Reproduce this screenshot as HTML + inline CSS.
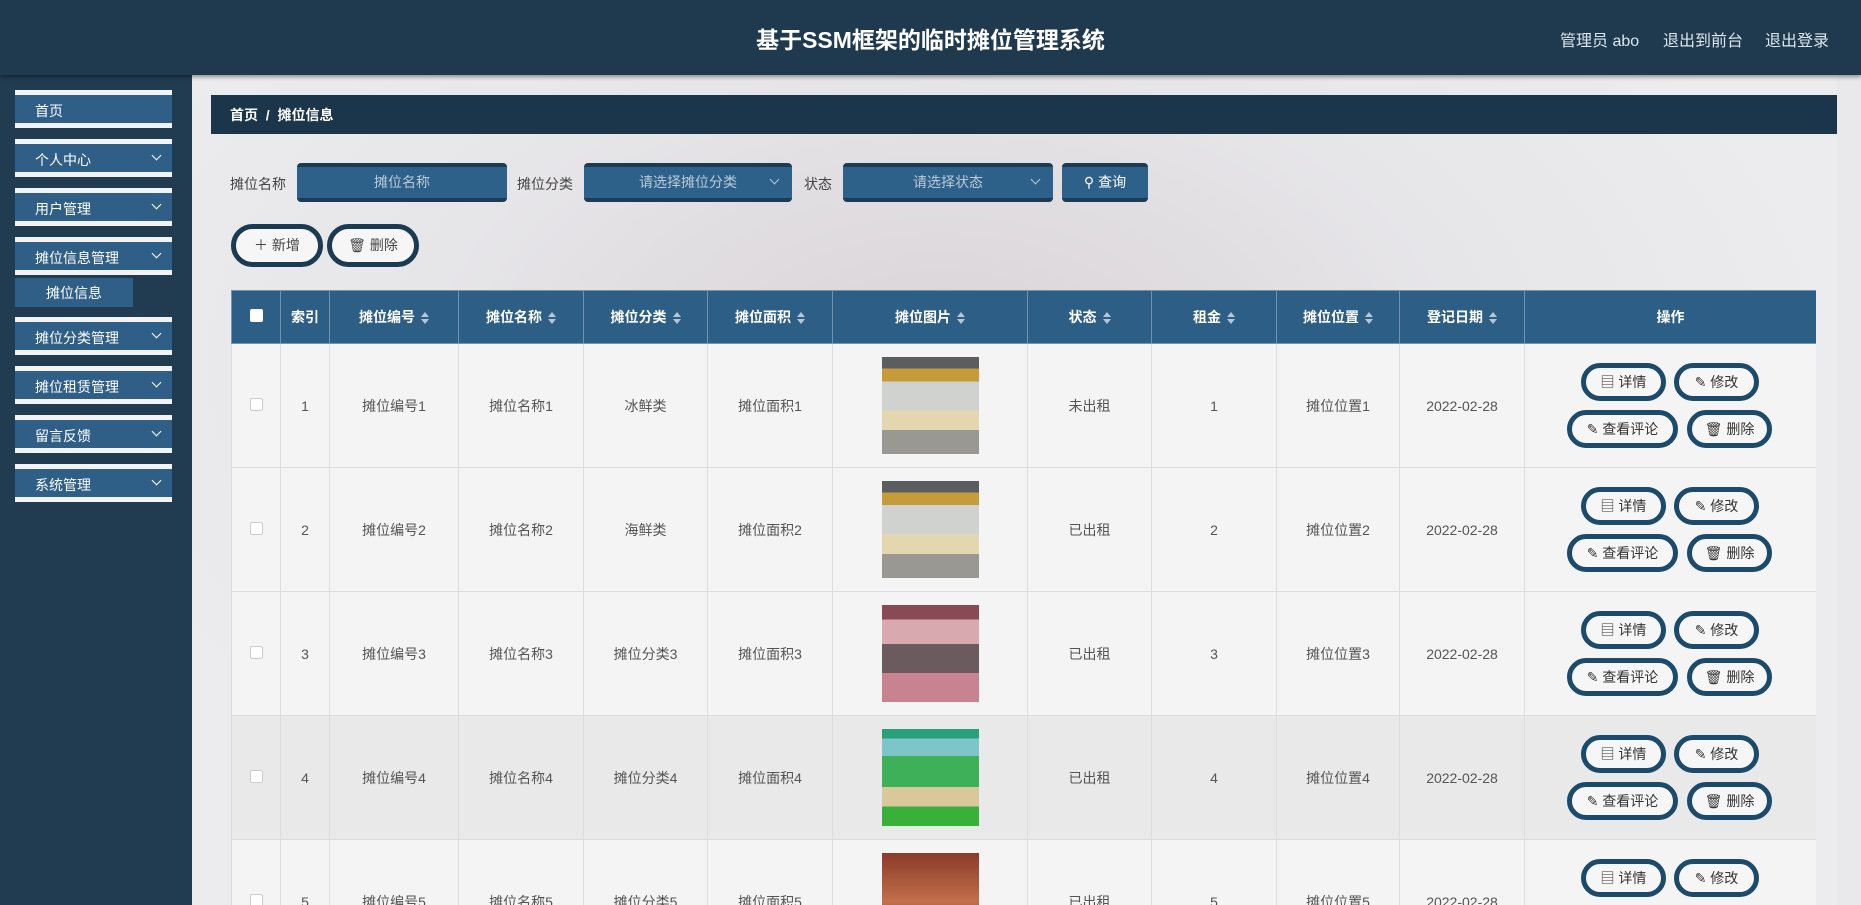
<!DOCTYPE html>
<html style="width:1861px;height:905px;overflow:hidden"><head><meta charset="utf-8">
<style>
*{margin:0;padding:0;box-sizing:border-box}
body{width:1861px;height:905px;overflow:hidden;position:relative;font-family:"Liberation Sans","Noto Sans CJK SC",sans-serif;background:#e3e4e7}
.hdr{position:absolute;left:0;top:0;width:1861px;height:75px;background:#1f3a4e;box-shadow:0 2px 4px rgba(0,0,0,.4);z-index:2}
.title{position:absolute;left:0;width:1861px;top:21px;text-align:center;color:#fff;font-size:23px;font-weight:bold}
.lnk{position:absolute;top:27px;color:#dbe6ee;font-size:16px}
.side{position:absolute;left:0;top:75px;width:192px;height:830px;background:#213c50}
.mi{position:absolute;left:15px;width:157px;height:38px;background:#2f5f87;border-top:5px solid #f2f3f5;border-bottom:5px solid #f2f3f5;color:#fff;font-size:14px;padding:6px 0 0 20px}
.mi .ar{position:absolute;right:12px;top:8px;width:7px;height:7px;border-right:1.4px solid #fff;border-bottom:1.4px solid #fff;transform:rotate(45deg)}
.sub{position:absolute;left:15px;top:278px;width:118px;height:29px;background:#2f5f87;color:#fff;font-size:14px;padding:5px 0 0 31px}
.main{position:absolute;left:192px;top:75px;width:1669px;height:830px;background:radial-gradient(ellipse at 45% 35%,#d9d3d6 0%,#e6e5e8 40%,#ececee 70%),#e8e8ea;overflow:hidden}
.bc{position:absolute;left:211px;top:95px;width:1626px;height:39px;background:#1b364a;color:#fff;font-size:14px;font-weight:bold;padding:10px 0 0 19px}
.lab{position:absolute;top:174px;font-size:14px;color:#444}
.inp{position:absolute;top:163px;height:39px;background:#2e6189;border-top:4px solid #1d3c54;border-bottom:4px solid #1d3c54;border-radius:4px;color:#b9cad8;font-size:14px;text-align:center;line-height:31px}
.inp .ar{position:absolute;right:14px;top:9px;width:7px;height:7px;border-right:1.4px solid #b9cad8;border-bottom:1.4px solid #b9cad8;transform:rotate(45deg)}
.pill{position:absolute;background:#f6f6f6;border:5px solid #1b3b52;border-radius:22px;color:#444;font-size:14px;text-align:center}
.tw{position:absolute;left:231px;top:290px;width:1585px;height:615px;overflow:hidden}
table{width:1585px;border-collapse:collapse;table-layout:fixed}
th{background:#2d5f86;color:#fff;height:53px;font-size:14px;font-weight:bold;border:1px solid #6f93b0}
td{height:124px;background:#f4f4f4;border:1px solid #dcdcdc;text-align:center;color:#555;font-size:14px;position:relative}
tr.hv td{background:#e9e9e9}
.s{display:inline-block;margin-left:6px;vertical-align:middle;width:8px;height:12px;position:relative}
.s:before{content:"";position:absolute;left:0;top:0;border:4px solid transparent;border-bottom:5px solid #b5c7d6;border-top:0}
.s:after{content:"";position:absolute;left:0;top:7px;border:4px solid transparent;border-top:5px solid #b5c7d6;border-bottom:0}
.cb{display:inline-block;width:13px;height:13px;border:1px solid #ccc;background:#fff;border-radius:2px}
.ops{position:relative;width:100%;height:120px}
.ob{position:absolute;height:38px;border:5px solid #1b4a6b;border-radius:20px;background:#f6f6f6;color:#333;font-size:14px;line-height:28px;text-align:center}
.pic{display:inline-block;width:97px;height:97px;vertical-align:middle}
</style></head><body>
<div class="hdr">
<div class="title">基于SSM框架的临时摊位管理系统</div>
<div class="lnk" style="left:1560px">管理员 abo</div>
<div class="lnk" style="left:1663px">退出到前台</div>
<div class="lnk" style="left:1765px">退出登录</div>
</div>
<div class="side"></div>
<div class="mi" style="top:90px">首页</div>
<div class="mi" style="top:139px">个人中心<span class="ar"></span></div>
<div class="mi" style="top:188px">用户管理<span class="ar"></span></div>
<div class="mi" style="top:237px">摊位信息管理<span class="ar"></span></div>
<div class="sub">摊位信息</div>
<div class="mi" style="top:317px">摊位分类管理<span class="ar"></span></div>
<div class="mi" style="top:366px">摊位租赁管理<span class="ar"></span></div>
<div class="mi" style="top:415px">留言反馈<span class="ar"></span></div>
<div class="mi" style="top:464px">系统管理<span class="ar"></span></div>
<div class="main"></div>
<div style="position:absolute;left:1837px;top:75px;width:24px;height:830px;background:#e9e9eb"></div>
<div class="bc">首页&nbsp;&nbsp;/&nbsp;&nbsp;摊位信息</div>
<div class="lab" style="left:230px">摊位名称</div>
<div class="inp" style="left:297px;width:210px">摊位名称</div>
<div class="lab" style="left:517px">摊位分类</div>
<div class="inp" style="left:584px;width:208px">请选择摊位分类<span class="ar"></span></div>
<div class="lab" style="left:804px">状态</div>
<div class="inp" style="left:843px;width:210px">请选择状态<span class="ar"></span></div>
<div class="inp" style="left:1062px;width:86px;color:#fff">&#9906; 查询</div>
<div class="pill" style="left:231px;top:224px;width:92px;height:43px;line-height:33px">＋ 新增</div>
<div class="pill" style="left:327px;top:224px;width:92px;height:43px;line-height:33px">🗑 删除</div>
<div class="tw">
<table>
<colgroup><col style="width:49px"><col style="width:49px"><col style="width:129px"><col style="width:125px"><col style="width:124px"><col style="width:125px"><col style="width:195px"><col style="width:124px"><col style="width:125px"><col style="width:123px"><col style="width:125px"><col style="width:292px"></colgroup>
<tr><th><span class="cb" style="border:none"></span></th><th>索引</th><th>摊位编号<span class="s"></span></th><th>摊位名称<span class="s"></span></th><th>摊位分类<span class="s"></span></th><th>摊位面积<span class="s"></span></th><th>摊位图片<span class="s"></span></th><th>状态<span class="s"></span></th><th>租金<span class="s"></span></th><th>摊位位置<span class="s"></span></th><th>登记日期<span class="s"></span></th><th>操作</th></tr>
<tr><td><span class="cb"></span></td><td>1</td><td>摊位编号1</td><td>摊位名称1</td><td>冰鲜类</td><td>摊位面积1</td><td><span class="pic" style="background:linear-gradient(#5a5e60 0 12%,#c79a3a 12% 25%,#cfd2cf 25% 55%,#e4d7b0 55% 75%,#9a9892 75%)"></span></td><td>未出租</td><td>1</td><td>摊位位置1</td><td>2022-02-28</td><td><div class="ops"><div class="ob" style="left:56px;top:17px;width:85px">▤ 详情</div><div class="ob" style="left:149px;top:17px;width:85px">✎ 修改</div><div class="ob" style="left:42px;top:64px;width:111px">✎ 查看评论</div><div class="ob" style="left:162px;top:64px;width:85px">🗑 删除</div></div></td></tr>
<tr><td><span class="cb"></span></td><td>2</td><td>摊位编号2</td><td>摊位名称2</td><td>海鲜类</td><td>摊位面积2</td><td><span class="pic" style="background:linear-gradient(#5a5e60 0 12%,#c79a3a 12% 25%,#cfd2cf 25% 55%,#e4d7b0 55% 75%,#9a9892 75%)"></span></td><td>已出租</td><td>2</td><td>摊位位置2</td><td>2022-02-28</td><td><div class="ops"><div class="ob" style="left:56px;top:17px;width:85px">▤ 详情</div><div class="ob" style="left:149px;top:17px;width:85px">✎ 修改</div><div class="ob" style="left:42px;top:64px;width:111px">✎ 查看评论</div><div class="ob" style="left:162px;top:64px;width:85px">🗑 删除</div></div></td></tr>
<tr><td><span class="cb"></span></td><td>3</td><td>摊位编号3</td><td>摊位名称3</td><td>摊位分类3</td><td>摊位面积3</td><td><span class="pic" style="background:linear-gradient(#8a4a55 0 15%,#d9a9b0 15% 40%,#6b5b5f 40% 70%,#c78390 70%)"></span></td><td>已出租</td><td>3</td><td>摊位位置3</td><td>2022-02-28</td><td><div class="ops"><div class="ob" style="left:56px;top:17px;width:85px">▤ 详情</div><div class="ob" style="left:149px;top:17px;width:85px">✎ 修改</div><div class="ob" style="left:42px;top:64px;width:111px">✎ 查看评论</div><div class="ob" style="left:162px;top:64px;width:85px">🗑 删除</div></div></td></tr>
<tr class="hv"><td><span class="cb"></span></td><td>4</td><td>摊位编号4</td><td>摊位名称4</td><td>摊位分类4</td><td>摊位面积4</td><td><span class="pic" style="background:linear-gradient(#2aa07a 0 10%,#7cc6c8 10% 28%,#3fb05a 28% 60%,#d9c89a 60% 80%,#38b03a 80%)"></span></td><td>已出租</td><td>4</td><td>摊位位置4</td><td>2022-02-28</td><td><div class="ops"><div class="ob" style="left:56px;top:17px;width:85px">▤ 详情</div><div class="ob" style="left:149px;top:17px;width:85px">✎ 修改</div><div class="ob" style="left:42px;top:64px;width:111px">✎ 查看评论</div><div class="ob" style="left:162px;top:64px;width:85px">🗑 删除</div></div></td></tr>
<tr><td><span class="cb"></span></td><td>5</td><td>摊位编号5</td><td>摊位名称5</td><td>摊位分类5</td><td>摊位面积5</td><td><span class="pic" style="background:linear-gradient(#8a3a2a,#c0704a 50%,#6a3030)"></span></td><td>已出租</td><td>5</td><td>摊位位置5</td><td>2022-02-28</td><td><div class="ops"><div class="ob" style="left:56px;top:17px;width:85px">▤ 详情</div><div class="ob" style="left:149px;top:17px;width:85px">✎ 修改</div><div class="ob" style="left:42px;top:64px;width:111px">✎ 查看评论</div><div class="ob" style="left:162px;top:64px;width:85px">🗑 删除</div></div></td></tr>
</table>
</div>
</body></html>
